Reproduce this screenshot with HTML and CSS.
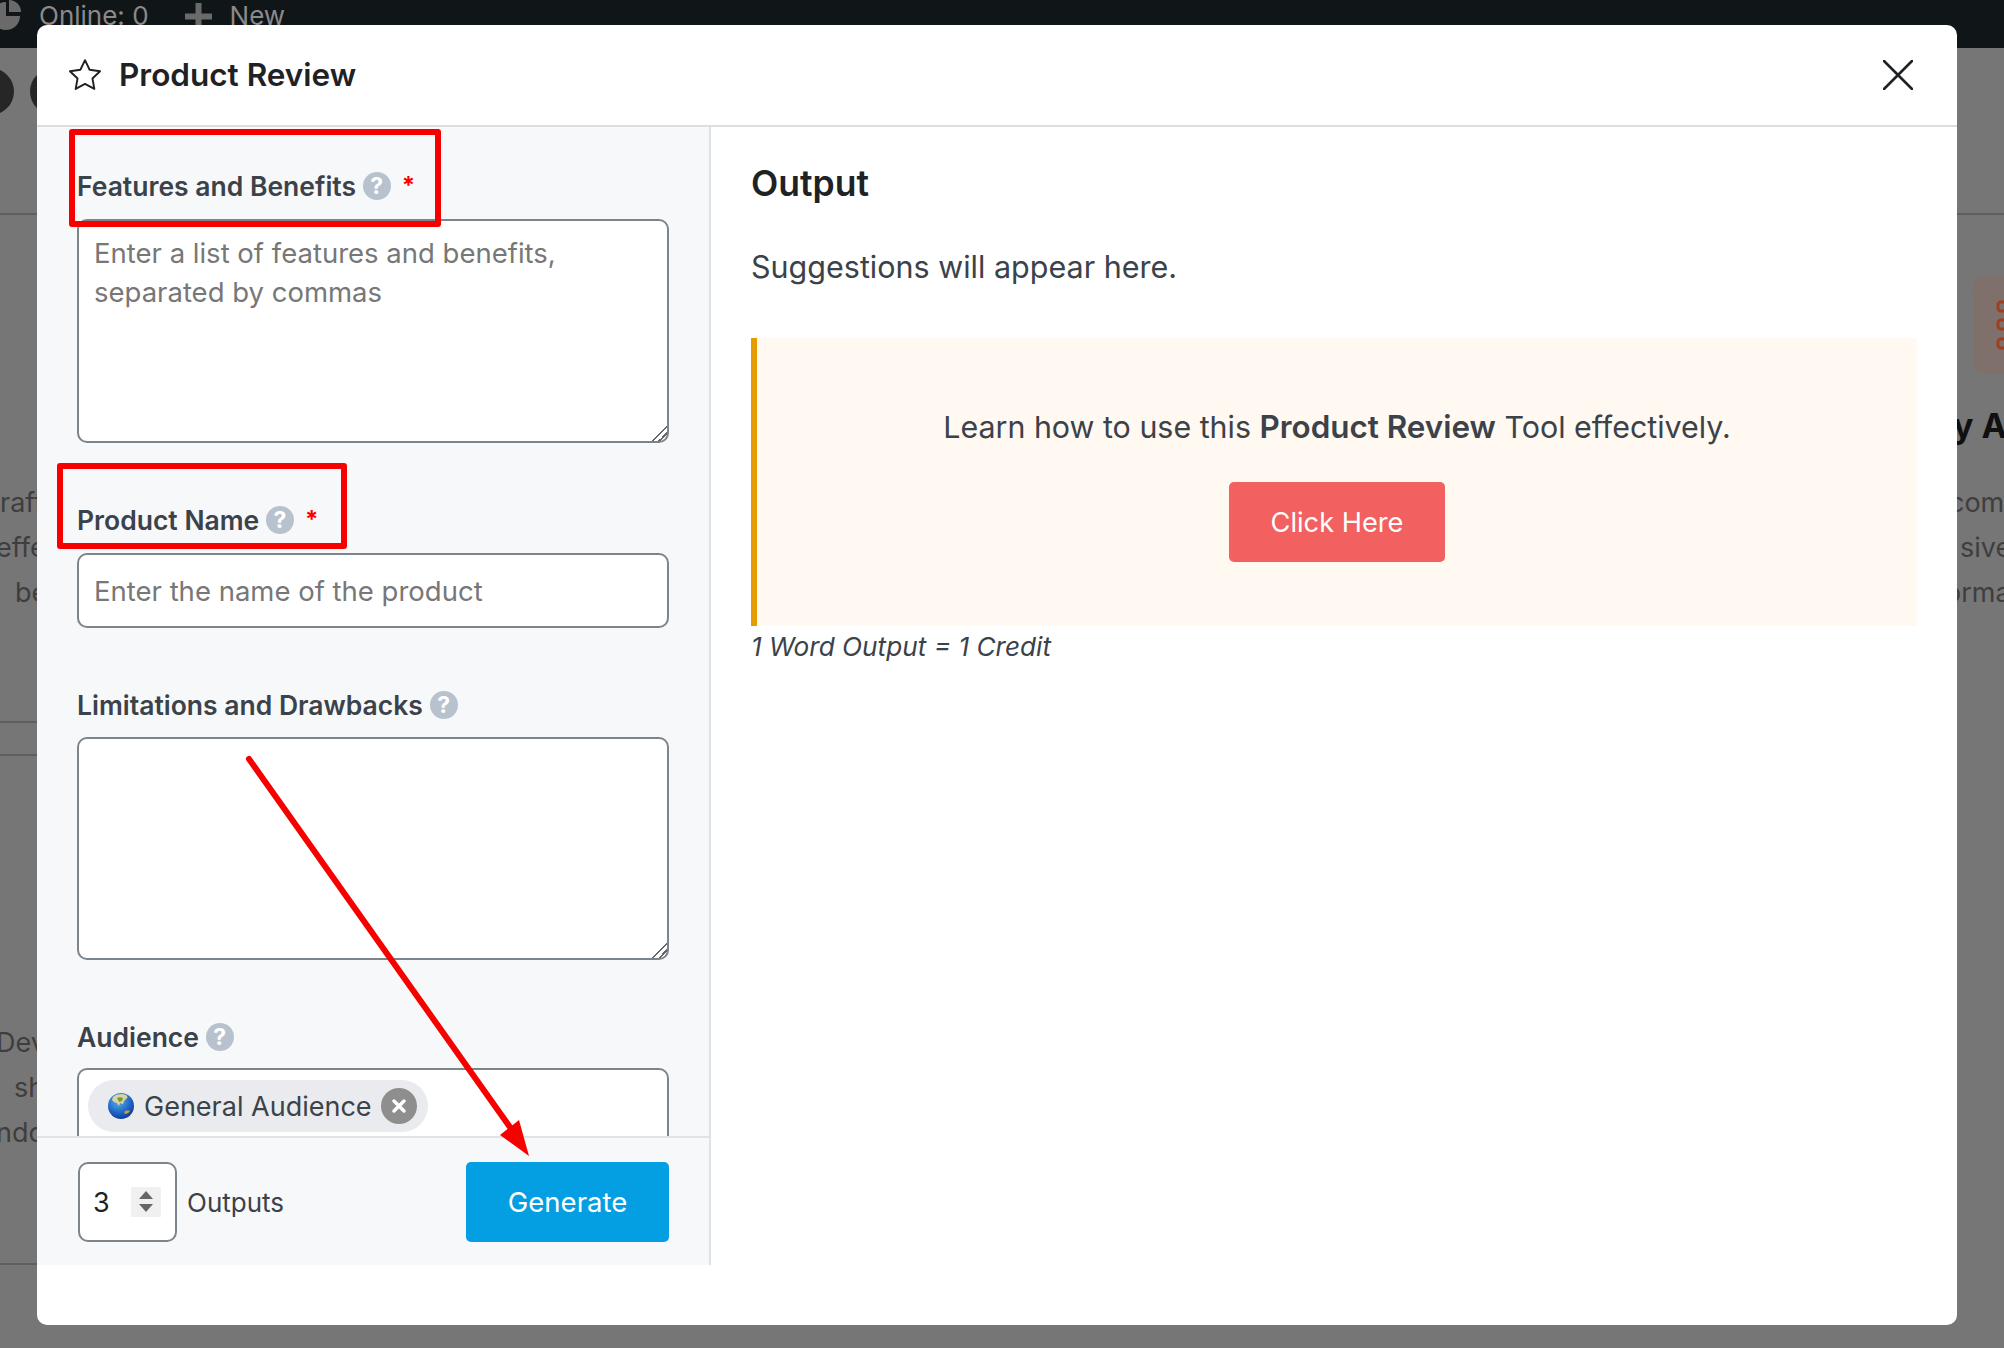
FILE: index.html
```html
<!DOCTYPE html>
<html lang="en">
<head>
<meta charset="utf-8">
<title>Product Review</title>
<link rel="stylesheet" href="styles.css">
</head>
<body>
<div class="topbar">
  <svg class="pie" width="22" height="32" viewBox="0 0 22 32"><path d="M-8 16a14 14 0 1 0 28 0H6V2a14 14 0 0 0-14 14z" fill="#6a6a6a"/><path d="M9 0a12 12 0 0 1 12 12H9z" fill="#6a6a6a"/></svg>
  <span class="top-text online">Online: 0</span>
  <svg class="plus" width="27" height="27" viewBox="0 0 27 27"><path d="M10.5 0h6v10.5H27v6H16.5V27h-6V16.5H0v-6h10.5z" fill="#6a6a6a"/></svg>
  <span class="top-text">New</span>
</div>
<div class="page">
  <div class="strip strip-left">
    <div class="circles"><i class="dot dot-a"></i><i class="dot dot-b"></i></div>
    <hr class="line line-a">
    <div class="bg-lines lines-a">
      <p class="off-0">raft</p>
      <p class="off-n">effect</p>
      <p class="off-15">be</p>
    </div>
    <hr class="line line-b">
    <hr class="line line-c">
    <div class="bg-lines lines-b">
      <p class="off-n">Dev</p>
      <p class="off-14">sh</p>
      <p class="off-n">ndo</p>
    </div>
    <hr class="line line-d">
  </div>
  <div class="strip strip-right">
    <hr class="line line-a">
    <div class="tile">
      <svg class="chain" width="8" height="50" viewBox="0 0 8 50"><g fill="none" stroke="#a03f20" stroke-width="3"><rect x="2" y="2" width="14" height="9" rx="3"/><rect x="2" y="20" width="14" height="9" rx="3"/><rect x="2" y="39" width="14" height="9" rx="3"/></g></svg>
    </div>
    <div class="bg-title">y AI</div>
    <div class="bg-lines lines-c">
      <p class="off-n8">com</p>
      <p class="off-3">sive</p>
      <p class="off-n12">orma</p>
    </div>
  </div>
</div>

<div class="modal">
  <header class="modal-head">
    <svg class="star" width="38" height="38" viewBox="0 0 24 24"><path d="M12 2.6l2.9 6.1 6.6.9-4.8 4.6 1.2 6.6-5.9-3.2-5.9 3.2 1.2-6.6L2.5 9.6l6.6-.9z" fill="none" stroke="#1e2225" stroke-width="1.2" stroke-linejoin="round"/></svg>
    <h1 class="modal-title">Product Review</h1>
    <svg class="close" width="30" height="30" viewBox="0 0 30 30"><path d="M1 1l28 28M29 1L1 29" stroke="#1e2225" stroke-width="2.6" stroke-linecap="round"/></svg>
  </header>
  <div class="modal-body">
    <aside class="side">
      <div class="form">
        <div class="field">
          <label class="label">Features and Benefits <span class="help">?</span><span class="req">*</span></label>
          <textarea class="control area" placeholder="Enter a list of features and benefits, separated by commas"></textarea>
        </div>
        <div class="field">
          <label class="label">Product Name <span class="help">?</span><span class="req">*</span></label>
          <input class="control single" type="text" placeholder="Enter the name of the product">
        </div>
        <div class="field field-tight">
          <label class="label">Limitations and Drawbacks <span class="help">?</span></label>
          <textarea class="control area"></textarea>
        </div>
        <div class="field field-audience">
          <label class="label">Audience <span class="help">?</span></label>
          <div class="control select">
            <span class="chip">
              <svg class="globe" width="26" height="26" viewBox="0 0 26 26"><defs><radialGradient id="sea" cx="40%" cy="30%" r="80%"><stop offset="0" stop-color="#5cb4f0"/><stop offset="0.6" stop-color="#1d62c4"/><stop offset="1" stop-color="#0e2f80"/></radialGradient></defs><circle cx="13" cy="13" r="13" fill="url(#sea)"/><path d="M5 4c3-3 9-4 13-2 2 1 2 3 0 4l-2 2-1 3-3-1-1 3-2-3-3-1-2-2z" fill="#dcd49a"/><path d="M9 5c2-1 4-1 6 0l-1 3-3 1z" fill="#6f9a46"/><path d="M17 18c2-1 4-1 5 0-1 2-3 3-5 3-1-1-1-2 0-3z" fill="#c79a3e"/></svg>
              <span class="chip-text">General Audience</span>
              <span class="chip-x"><svg width="14" height="14" viewBox="0 0 14 14"><path d="M2 2l10 10M12 2L2 12" stroke="#fff" stroke-width="3.4" stroke-linecap="round"/></svg></span>
            </span>
          </div>
        </div>
      </div>
      <div class="side-foot">
        <div class="number">
          <span class="number-val">3</span>
          <span class="spin"><i class="tri tri-up"></i><i class="tri tri-down"></i></span>
        </div>
        <span class="outputs">Outputs</span>
        <button class="btn btn-go" type="button">Generate</button>
      </div>
    </aside>
    <main class="result">
      <h2 class="result-title">Output</h2>
      <p class="result-sub">Suggestions will appear here.</p>
      <div class="callout">
        <p class="callout-text">Learn how to use this <strong>Product Review</strong> Tool effectively.</p>
        <button class="btn btn-click" type="button">Click Here</button>
      </div>
      <p class="credit">1 Word Output = 1 Credit</p>
    </main>
  </div>
</div>

<svg class="marks" width="2004" height="1348" viewBox="0 0 2004 1348">
  <g fill="none" stroke="#f60000" stroke-width="6" stroke-linejoin="round">
    <rect x="72" y="132" width="366" height="92"/>
    <rect x="60" y="466" width="284" height="80"/>
  </g>
  <path d="M249 759L512 1130" stroke="#f60000" stroke-width="6" stroke-linecap="round"/>
  <path d="M529 1156L500 1135L519 1120z" fill="#f60000"/>
</svg>
</body>
</html>
```

FILE: styles.css
```css
* { box-sizing: border-box; }
html, body { margin: 0; padding: 0; }
body {
  width: 2004px;
  height: 1348px;
  overflow: hidden;
  position: relative;
  background: #767676;
  font-family: Inter, "Liberation Sans", sans-serif;
  color: #3b4249;
}

/* background page */
.topbar {
  height: 48px;
  background: #101517;
  display: flex;
  align-items: flex-start;
  overflow: hidden;
}
.pie { margin-top: 0; flex: none; }
.top-text { font-size: 26px; line-height: 32px; color: #8a8a8a; }
.online { margin-left: 17px; }
.plus { margin: 3px 18px 0 36px; flex: none; }

.page { display: flex; justify-content: space-between; height: 1300px; }
.strip { overflow: hidden; }
.strip-left { width: 37px; }
.strip-right { width: 47px; }
.circles { display: flex; gap: 16px; margin: 20px 0 0 -33px; }
.dot { width: 47px; height: 47px; border-radius: 50%; background: #262626; flex: none; }
.line { border: 0; height: 2px; background: #5f5f5f; margin: 0; }
.strip-left .line-a { margin-top: 98px; }
.strip-right .line-a { margin-top: 165px; }
.line-b { margin-top: 106px; }
.line-c { margin-top: 31px; }
.line-d { margin-top: 108px; }
.bg-lines { font-size: 27px; line-height: 45px; color: #3e3e3e; white-space: nowrap; }
.bg-lines p { margin: 0; }
.lines-a { margin-top: 265px; }
.lines-b { margin-top: 264px; }
.off-0 { margin-left: 0; }
.bg-lines .off-n { margin-left: -4px; }
.bg-lines .off-15 { margin-left: 15px; }
.bg-lines .off-14 { margin-left: 14px; }
.bg-lines .off-3 { margin-left: 3px; }
.bg-lines .off-n8 { margin-left: -8px; }
.bg-lines .off-n12 { margin-left: -12px; }
.tile {
  width: 60px;
  height: 99px;
  margin: 60px 0 0 16px;
  border-radius: 14px;
  background: #7f706c;
  display: flex;
  align-items: center;
  padding-left: 23px;
}
.chain { flex: none; }
.bg-title { font-size: 34px; line-height: 44px; font-weight: 700; color: #101010; margin: 30px 0 0 -4px; white-space: nowrap; }
.lines-c { margin-top: 32px; }

/* modal */
.modal {
  position: absolute;
  left: 37px;
  top: 25px;
  width: 1920px;
  height: 1300px;
  background: #fff;
  border-radius: 10px;
  display: flex;
  flex-direction: column;
}
.modal-head {
  height: 102px;
  flex: none;
  display: flex;
  align-items: center;
  padding: 0 44px 0 29px;
  border-bottom: 2px solid #dcdfe1;
}
.star { flex: none; }
.modal-title { margin: 0 0 0 15px; font-size: 31.5px; line-height: 40px; font-weight: 600; color: #1e2225; flex: 1; }
.close { flex: none; }

.modal-body { height: 1138px; flex: none; display: flex; }
.side {
  width: 674px;
  flex: none;
  background: #f6f8fa;
  border-right: 2px solid #e0e3e6;
  display: flex;
  flex-direction: column;
}
.form { height: 1009px; flex: none; overflow: hidden; padding: 41px 40px 0; }
.field { margin-bottom: 59px; }
.label {
  display: flex;
  align-items: center;
  height: 36px;
  margin-bottom: 15px;
  font-size: 26.5px;
  font-weight: 600;
  color: #3b4249;
  white-space: pre;
}
.field-tight .label { margin-bottom: 14px; }
.field-audience .label { margin-bottom: 13px; }
.help {
  width: 28px;
  height: 28px;
  border-radius: 50%;
  background: #b8c2cf;
  color: #fff;
  font-size: 23px;
  font-weight: 700;
  display: flex;
  align-items: center;
  justify-content: center;
}
.req { color: #f00; font-size: 24px; font-weight: 700; margin-left: 11px; line-height: 1; }

.control {
  display: block;
  width: 592px;
  border: 2px solid #7c848c;
  border-radius: 10px;
  background: #fff;
  font-family: inherit;
  font-size: 27.5px;
  color: #3b4249;
  outline: none;
}
.area { height: 224px; padding: 13px 15px; line-height: 39px; resize: vertical; }
.field-tight .area { height: 223px; }
.area::-webkit-resizer {
  background: linear-gradient(135deg, transparent 48%, #666 48%, #666 55%, transparent 55%, transparent 70%, #666 70%, #666 77%, transparent 77%);
}
.single { height: 75px; padding: 0 15px; }
.control::placeholder { color: #777; opacity: 1; }
.select { height: 90px; padding: 10px 9px; }
.chip {
  display: inline-flex;
  align-items: center;
  height: 52px;
  padding: 0 11px 0 20px;
  border-radius: 26px;
  background: #e9ebee;
  font-size: 27px;
  color: #3b4249;
}
.globe { flex: none; }
.chip-text { margin: 0 9px 0 10px; }
.chip-x {
  width: 36px;
  height: 36px;
  border-radius: 50%;
  background: #8e8e8e;
  display: flex;
  align-items: center;
  justify-content: center;
}

.side-foot {
  height: 129px;
  flex: none;
  border-top: 2px solid #e0e3e6;
  display: flex;
  align-items: center;
  padding: 0 40px 0 41px;
}
.number {
  width: 99px;
  height: 80px;
  border: 2px solid #7c848c;
  border-radius: 10px;
  background: #fff;
  display: flex;
  align-items: center;
  padding-left: 13px;
}
.number-val { font-size: 27px; color: #1e2225; width: 38px; padding-top: 2px; }
.spin {
  width: 30px;
  height: 30px;
  background: #f0f0f0;
  display: flex;
  flex-direction: column;
  align-items: center;
  justify-content: center;
  gap: 5px;
}
.tri { width: 0; height: 0; border-left: 7px solid transparent; border-right: 7px solid transparent; }
.tri-up { border-bottom: 8px solid #666; }
.tri-down { border-top: 8px solid #666; }
.outputs { font-size: 26px; margin-left: 10px; padding-top: 2px; flex: 1; color: #3b4249; }

.btn {
  border: 0;
  font-family: inherit;
  font-size: 27.5px;
  color: #fff;
  border-radius: 5px;
}
.btn-go { width: 203px; height: 80px; background: #049fe3; }

.result { flex: 1; padding: 36px 40px 0 40px; }
.result-title { margin: 0; font-size: 35.5px; line-height: 42px; font-weight: 600; color: #1e2225; }
.result-sub { margin: 41px 0 0; font-size: 30.5px; line-height: 42px; color: #3b4249; }
.callout {
  margin-top: 50px;
  height: 288px;
  background: #fff9f2;
  border-left: 6px solid #e69b00;
  display: flex;
  flex-direction: column;
  align-items: center;
  padding-top: 69px;
}
.callout-text { margin: 0; font-size: 30.4px; line-height: 40px; color: #3b4249; }
.callout-text strong { font-size: 31.4px; font-weight: 600; }
.btn-click { margin-top: 35px; width: 216px; height: 80px; background: #f26060; font-size: 27.2px; }
.credit { margin: 3px 0 0; font-size: 26.2px; line-height: 36px; font-style: italic; color: #3b4249; }

.marks { position: absolute; left: 0; top: 0; pointer-events: none; }
```
